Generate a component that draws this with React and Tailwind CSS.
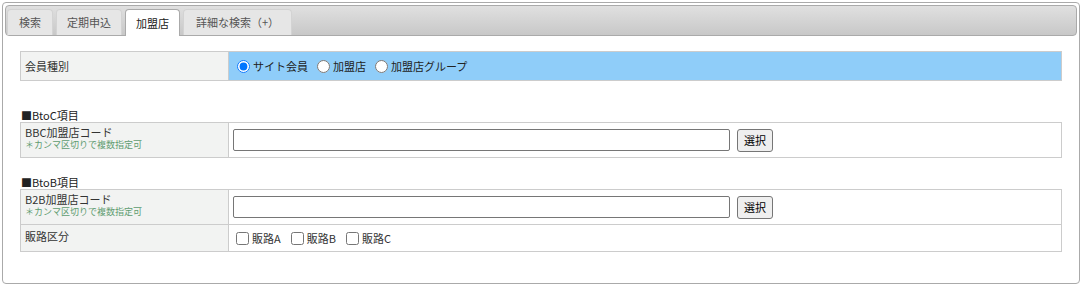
import React from "react";

const TABS = [
  { label: "検索", width: "w-[46px]" },
  { label: "定期申込", width: "w-[66px]" },
  { label: "加盟店", width: "w-[55px]", active: true },
  { label: "詳細な検索（+）", width: "w-[109px]" },
];

function Tab({ label, width, active }) {
  // active tab is 1px taller so it covers the header's bottom border
  if (active) {
    return (
      <div className={`${width} h-[27px] relative flex items-center justify-center border border-b-0 border-[#aaa] rounded-t-[4px] bg-white text-[#212121]`}>
        {label}
      </div>
    );
  }
  return (
    <div className={`${width} h-[26px] flex items-center justify-center border border-b-0 border-[#d3d3d3] rounded-t-[4px] bg-[#e6e6e6] text-[#555]`}>
      {label}
    </div>
  );
}

function Radio({ label, checked }) {
  return (
    <label className="flex items-center mr-[9px]">
      <input type="radio" name="member" defaultChecked={checked} className="m-0 mr-[3px] w-[13px] h-[13px]" />
      <span className="leading-[14px]">{label}</span>
    </label>
  );
}

function Check({ label }) {
  return (
    <label className="flex items-center mr-[10px]">
      <input type="checkbox" className="m-0 mr-[3px] w-[13px] h-[13px]" />
      <span className="leading-[14px]">{label}</span>
    </label>
  );
}

function CodeField() {
  return (
    <div className="flex-1 flex items-center pl-[4px]">
      <input type="text" className="w-[497px] h-[22px] border border-[#767676] rounded-[2px] bg-white" />
      <button className="ml-[7px] w-[36px] h-[23px] border border-[#767676] rounded-[3px] bg-[#efefef] text-[11px] leading-[14px] text-black">
        選択
      </button>
    </div>
  );
}

function CodeLabel({ title }) {
  return (
    <div className="w-[208px] border-r border-[#ccc] bg-[#f2f3f2] pl-[4px] pt-[3px]">
      <div className="leading-[13px]">{title}</div>
      <div className="text-[9px] leading-[12px] text-[#5e9c70]">＊カンマ区切りで複数指定可</div>
    </div>
  );
}

export default function App() {
  return (
    <div className="w-[1083px] h-[285px] bg-white pl-[2px] pt-[2px] font-['Noto_Sans_CJK_JP','Liberation_Sans',sans-serif] text-[11px] text-[#333]">
      <div className="w-[1078px] h-[282px] border border-[#aaa] rounded-[4px] p-[2px]">
        {/* tab header */}
        <div className="h-[31px] flex items-start gap-[3px] pl-[1px] pt-[3px] border border-[#aaa] rounded-[4px] bg-linear-to-b from-[#e0e0e0] to-[#c8c8c8]">
          {TABS.map((t) => (
            <Tab key={t.label} {...t} />
          ))}
        </div>

        <div className="px-[15px] pt-[15px]">
          {/* 会員種別 */}
          <div className="flex h-[30px] border border-[#ccc]">
            <div className="w-[208px] border-r border-[#ccc] bg-[#f2f3f2] flex items-center pl-[4px] leading-[13px]">
              会員種別
            </div>
            <div className="flex-1 flex items-center pl-[8px] bg-[#8fcdf9] text-[#222]">
              <Radio label="サイト会員" checked />
              <Radio label="加盟店" />
              <Radio label="加盟店グループ" />
            </div>
          </div>

          <div className="mt-[27px] h-[14px] leading-[14px] pl-[1px] text-[#222]">■BtoC項目</div>
          <div className="flex h-[36px] border border-[#ccc]">
            <CodeLabel title="BBC加盟店コード" />
            <CodeField />
          </div>

          <div className="mt-[17px] h-[14px] leading-[14px] pl-[1px] text-[#222]">■BtoB項目</div>
          <div className="border border-[#ccc]">
            <div className="flex h-[35px] border-b border-[#ccc]">
              <CodeLabel title="B2B加盟店コード" />
              <CodeField />
            </div>
            <div className="flex h-[26px]">
              <div className="w-[208px] border-r border-[#ccc] bg-[#f2f3f2] pl-[4px] pt-[5px] leading-[13px]">
                販路区分
              </div>
              <div className="flex-1 flex items-center pl-[7px]">
                <Check label="販路A" />
                <Check label="販路B" />
                <Check label="販路C" />
              </div>
            </div>
          </div>
        </div>
      </div>
    </div>
  );
}
